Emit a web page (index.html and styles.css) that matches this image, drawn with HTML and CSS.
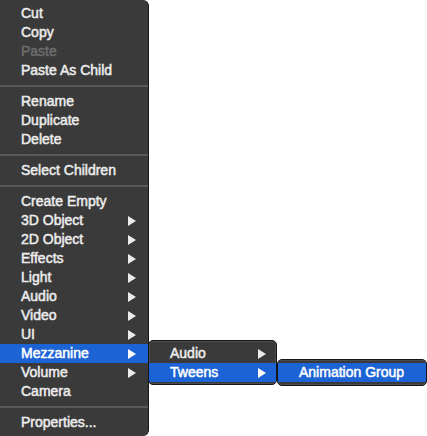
FILE: index.html
```html
<!DOCTYPE html>
<html>
<head>
<meta charset="utf-8">
<link rel="stylesheet" href="styles.css">
</head>
<body>
<div class="stage">
  <ul class="menu main">
    <li class="item">Cut</li>
    <li class="item">Copy</li>
    <li class="item disabled">Paste</li>
    <li class="item">Paste As Child</li>
    <li class="sep"></li>
    <li class="item">Rename</li>
    <li class="item">Duplicate</li>
    <li class="item">Delete</li>
    <li class="sep"></li>
    <li class="item">Select Children</li>
    <li class="sep"></li>
    <li class="item">Create Empty</li>
    <li class="item sub">3D Object</li>
    <li class="item sub">2D Object</li>
    <li class="item sub">Effects</li>
    <li class="item sub">Light</li>
    <li class="item sub">Audio</li>
    <li class="item sub">Video</li>
    <li class="item sub">UI</li>
    <li class="item sub active">Mezzanine</li>
    <li class="item sub">Volume</li>
    <li class="item">Camera</li>
    <li class="sep"></li>
    <li class="item">Properties...</li>
  </ul>
  <ul class="menu submenu1">
    <li class="item sub">Audio</li>
    <li class="item sub active">Tweens</li>
  </ul>
  <ul class="menu submenu2">
    <li class="item active">Animation Group</li>
  </ul>
</div>
</body>
</html>
```
FILE: styles.css
```css
html, body {
  margin: 0;
  padding: 0;
  background: #ffffff;
}
.stage {
  position: relative;
  width: 427px;
  height: 436px;
  overflow: hidden;
  font-family: "Liberation Sans", Arial, sans-serif;
  font-size: 14px;
  font-weight: normal;
  -webkit-text-stroke: 0.5px currentColor;
  color: #ececec;
}
.menu {
  list-style: none;
  margin: 0;
  background: #3a3a3a;
  box-sizing: border-box;
}
.main {
  width: 149px;
  height: 436px;
  padding: 4px 0;
  border-right: 1px solid #161616;
  border-radius: 0 6px 6px 0;
}
.item {
  position: relative;
  height: 19px;
  line-height: 19px;
  padding-left: 21px;
  white-space: nowrap;
}
.item.disabled {
  color: #6c6c6c;
}
.item.active {
  background: #1c63d5;
  color: #ffffff;
}
.item.sub::after {
  content: "";
  position: absolute;
  right: 12px;
  top: 5px;
  width: 0;
  height: 0;
  border-top: 5px solid transparent;
  border-bottom: 5px solid transparent;
  border-left: 8px solid #ececec;
}
.item.active.sub::after {
  border-left-color: #ffffff;
}
.sep {
  height: 12px;
  display: flex;
  align-items: center;
}
.sep::before {
  content: "";
  display: block;
  width: 100%;
  height: 2px;
  background: #595959;
}
.submenu1,
.submenu2 {
  position: absolute;
  border: 1px solid #151515;
  box-shadow: inset 0 0 0 1px #4c4c4c;
  border-radius: 5px;
  overflow: hidden;
}
.submenu1 {
  left: 148px;
  top: 340px;
  width: 129px;
  padding: 3px 0 2px;
}
.submenu1 .item.sub::after {
  right: 10px;
}
.submenu2 {
  left: 277px;
  top: 359px;
  width: 150px;
  padding: 3px 0 3px;
}
```
